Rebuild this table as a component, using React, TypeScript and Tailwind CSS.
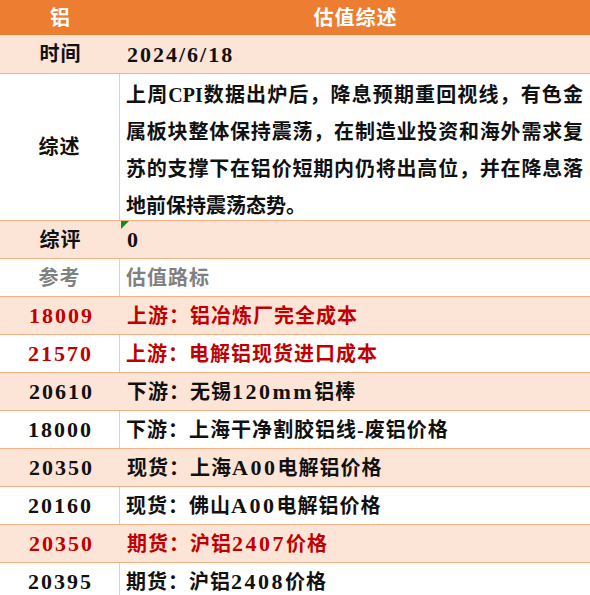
import React from "react";

type Row = {
  left: string;
  right: string;
  peach: boolean;
  tone: "black" | "red" | "gray";
};

const rows: Row[] = [
  { left: "参考", right: "估值路标", peach: false, tone: "gray" },
  { left: "18009", right: "上游：铝冶炼厂完全成本", peach: true, tone: "red" },
  { left: "21570", right: "上游：电解铝现货进口成本", peach: false, tone: "red" },
  { left: "20610", right: "下游：无锡120mm铝棒", peach: true, tone: "black" },
  { left: "18000", right: "下游：上海干净割胶铝线-废铝价格", peach: false, tone: "black" },
  { left: "20350", right: "现货：上海A00电解铝价格", peach: true, tone: "black" },
  { left: "20160", right: "现货：佛山A00电解铝价格", peach: false, tone: "black" },
  { left: "20350", right: "期货：沪铝2407价格", peach: true, tone: "red" },
  { left: "20395", right: "期货：沪铝2408价格", peach: false, tone: "black" },
];

const toneClass = {
  black: "text-[#111111]",
  red: "text-[#c00000]",
  gray: "text-[#808080]",
};

function Mixed({ text }: { text: string }) {
  const parts = text.split(/([0-9A-Za-z]+)/);
  return (
    <>
      {parts.map((p, i) =>
        /^[0-9A-Za-z]+$/.test(p) ? (
          <span key={i} className="text-[22px] tracking-[2.5px]">
            {p}
          </span>
        ) : (
          <span key={i}>{p}</span>
        )
      )}
    </>
  );
}

const summaryLines = [
  "上周CPI数据出炉后，降息预期重回视线，有色金",
  "属板块整体保持震荡，在制造业投资和海外需求复",
  "苏的支撑下在铝价短期内仍将出高位，并在降息落",
  "地前保持震荡态势。",
];

export default function App() {
  return (
    <div
      className="w-[590px] h-[595px] overflow-hidden bg-white font-bold text-[20px] text-[#111111]"
      style={{ fontFamily: '"Liberation Serif", "Noto Sans CJK SC", serif' }}
    >
      {/* header */}
      <div className="flex h-[35px] bg-[#ed7d31] text-white tracking-[1px]">
        <div className="w-[121px] flex items-center justify-center">铝</div>
        <div className="flex-1 flex items-center justify-center">估值综述</div>
      </div>

      {/* time */}
      <div className="flex h-[39px] bg-[#fce4d6] border-b border-[#f4b084]">
        <div className="w-[121px] flex items-center justify-center tracking-[1px]">时间</div>
        <div className="flex-1 flex items-center pl-[6px] text-[22px] tracking-[2px]">2024/6/18</div>
      </div>

      {/* summary */}
      <div className="flex h-[147px] bg-white border-b border-[#f4b084]">
        <div className="w-[120px] border-r border-[#d4d4d4] flex items-center justify-center tracking-[1px]">
          综述
        </div>
        <div className="flex-1 pl-[6px] pr-[7px] pt-[3px]">
          {summaryLines.map((l, i) => (
            <div
              key={i}
              className={
                i < summaryLines.length - 1
                  ? "leading-[37px] text-justify [text-align-last:justify] whitespace-nowrap"
                  : "leading-[37px] text-left whitespace-nowrap"
              }
            >
              {l}
            </div>
          ))}
        </div>
      </div>

      {/* comment row */}
      <div className="flex h-[38px] bg-[#fce4d6] border-b border-[#f4b084]">
        <div className="w-[121px] flex items-center justify-center tracking-[1px]">综评</div>
        <div className="relative flex-1 flex items-center pl-[6px] text-[22px]">
          <span className="absolute left-0 top-0 w-0 h-0 border-t-[8px] border-t-[#13891a] border-r-[8px] border-r-transparent" />
          0
        </div>
      </div>

      {rows.map((r, i) => {
        const isNum = /^\d+$/.test(r.left);
        const leftText = isNum ? "text-[22px] tracking-[2px] pl-[2px]" : "tracking-[1px]";
        return (
          <div
            key={i}
            className={
              "flex h-[38px] border-b border-[#f4b084] " +
              (r.peach ? "bg-[#fce4d6]" : "bg-white") +
              " " +
              toneClass[r.tone]
            }
          >
            {r.peach ? (
              <div className={"w-[121px] flex items-center justify-center " + leftText}>{r.left}</div>
            ) : (
              <div className={"w-[120px] border-r border-[#d4d4d4] flex items-center justify-center " + leftText}>
                {r.left}
              </div>
            )}
            <div className="flex-1 flex items-center pl-[6px] tracking-[1px] whitespace-nowrap">
              <Mixed text={r.right} />
            </div>
          </div>
        );
      })}
    </div>
  );
}
